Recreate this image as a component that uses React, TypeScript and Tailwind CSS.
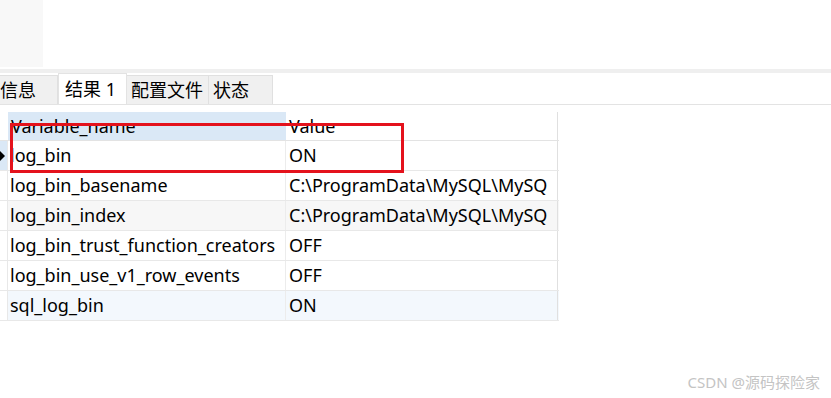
import React from 'react'

interface row {
  name: string
  value: string
  bg?: string
}

const rows: row[] = [
  { name: 'log_bin', value: 'ON', bg: 'bg-white' },
  { name: 'log_bin_basename', value: 'C:\\ProgramData\\MySQL\\MySQ', bg: 'bg-white' },
  { name: 'log_bin_index', value: 'C:\\ProgramData\\MySQL\\MySQ', bg: 'bg-[#f7f7f7]' },
  { name: 'log_bin_trust_function_creators', value: 'OFF', bg: 'bg-white' },
  { name: 'log_bin_use_v1_row_events', value: 'OFF', bg: 'bg-white' },
  { name: 'sql_log_bin', value: 'ON', bg: 'bg-[#f3f8fd]' },
]

const tabs = [
  { label: '信息', w: 'w-[58px]', active: false },
  { label: '结果 1', w: 'w-[69px]', active: true },
  { label: '配置文件', w: 'w-[82px]', active: false },
  { label: '状态', w: 'w-[64px]', active: false },
]

const font = "font-['Noto_Sans','Noto_Sans_CJK_SC',sans-serif]"

const App: React.FC = () => {
  return (
    <div className={`relative w-[831px] h-[398px] bg-white overflow-hidden text-black ${font}`}>
      {/* top area */}
      <div className="h-[69px] flex">
        <div className="w-[43px] h-[67px] bg-[#f8f8f8]" />
      </div>
      <div className="h-[4px] bg-[#efefef]" />

      {/* tabs */}
      <div className="h-[32px] flex items-end border-b border-[#e3e3e3]">
        {tabs.map((t, i) => (
          <div
            key={i}
            className={
              t.active
                ? `${t.w} h-[31px] bg-white border-x border-t border-[#e3e3e3] flex items-center pl-[6px] text-[18px] leading-none`
                : `${t.w} h-[29px] bg-[#f0f0f0] border-r border-t border-[#e0e0e0] flex items-center text-[18px] leading-none ${i === 0 ? 'pl-0' : 'pl-[4px]'}`
            }
          >
            <span className="-mt-[1px] whitespace-nowrap">{t.label}</span>
          </div>
        ))}
      </div>

      {/* grid */}
      <div className="mt-[7px] w-[559px]">
        <div className="flex h-[29px] border-b border-[#e3e3e3]">
          <div className="w-[8px] bg-white" />
          <div className="w-[278px] bg-[#dae8f6] pl-[3px] flex items-center text-[18px] overflow-hidden whitespace-nowrap">
            Variable_name
          </div>
          <div className="w-[272px] pl-[3px] flex items-center text-[18px] border-r border-[#e0e0e0] overflow-hidden whitespace-nowrap">
            Value
          </div>
        </div>
        {rows.map((r, i) => (
          <div key={i} className={`flex h-[30px] border-b border-[#e8e8e8] ${r.bg}`}>
            <div className={`w-[8px] relative ${i === 0 ? 'bg-[#dae8f6]' : 'bg-white'} border-r border-[#e8e8e8]`}>
              {i === 0 && (
                <div className="absolute left-0 top-[10px] w-0 h-0 border-y-[5px] border-y-transparent border-l-[5px] border-l-black" />
              )}
            </div>
            <div className="w-[278px] pl-[2px] flex items-center text-[18px] border-r border-[#ececec] overflow-hidden whitespace-nowrap">
              {r.name}
            </div>
            <div className="w-[272px] pl-[3px] flex items-center text-[18px] border-r border-[#e0e0e0] overflow-hidden whitespace-nowrap">
              {r.value}
            </div>
          </div>
        ))}
      </div>

      {/* highlight box */}
      <div className="absolute left-[10px] top-[123px] w-[394px] h-[50px] border-[3px] border-[#e4121c]" />

      {/* watermark */}
      <div className="absolute right-[11px] top-[371px] text-[15px] text-[#c4c4c4] whitespace-nowrap">
        CSDN @源码探险家
      </div>
    </div>
  )
}

export default App
